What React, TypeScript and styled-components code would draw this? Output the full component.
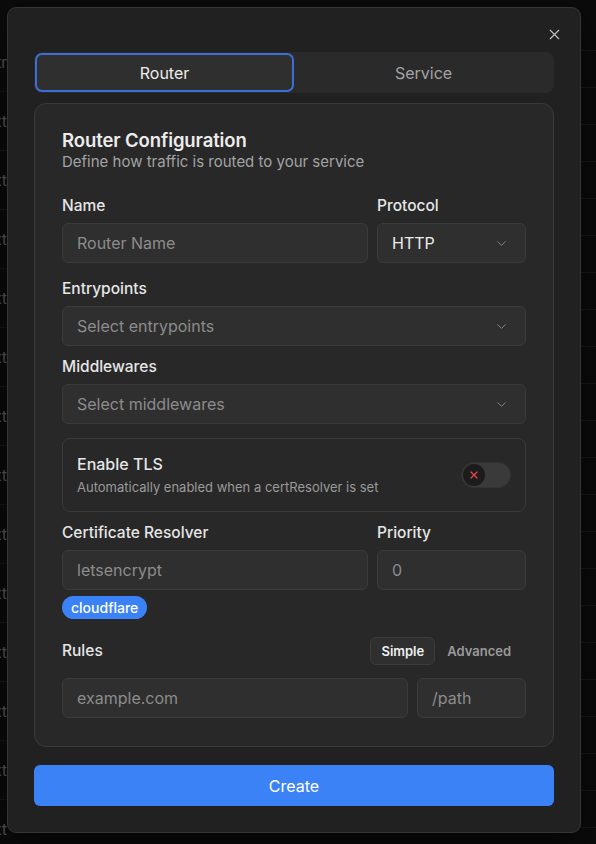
import React, { useState } from "react";
import styled, { createGlobalStyle } from "styled-components";
import { ChevronDown, X } from "lucide-react";

const GlobalStyle = createGlobalStyle`
  html, body {
    margin: 0;
    padding: 0;
    background: #111111;
    font-family: Inter, "Noto Sans", sans-serif;
    -webkit-font-smoothing: antialiased;
  }
  * { box-sizing: border-box; }
`;

/* page behind the dialog */
const Backdrop = styled.div`
  position: fixed;
  inset: 0;
  display: flex;
  background: #121212;
  overflow: hidden;
`;

const BackColumn = styled.div<{ $width: string; $row: number; $offset: number }>`
  width: ${(p) => p.$width};
  flex: ${(p) => (p.$width === "auto" ? 1 : "none")};
  display: flex;
  flex-direction: column;
  padding-top: ${(p) => p.$offset}px;

  & > div {
    height: ${(p) => p.$row}px;
    flex: none;
    border-bottom: 1px solid #262626;
    color: #8a8a8a;
    font-size: 15px;
    display: flex;
    align-items: center;
    justify-content: flex-end;
    white-space: nowrap;
    overflow: hidden;
  }
`;

const Overlay = styled.div`
  position: fixed;
  inset: 0;
  background: rgba(0, 0, 0, 0.35);
  display: flex;
  justify-content: flex-start;
  align-items: flex-start;
  padding: 7px 0 0 7px;
`;

const Dialog = styled.div`
  position: relative;
  width: 574px;
  background: #212121;
  border: 1px solid #353535;
  border-radius: 9px;
  padding: 44px 26px 26px;
  display: flex;
  flex-direction: column;
  box-shadow: 0 10px 40px rgba(0, 0, 0, 0.5);
`;

const CloseButton = styled.button`
  position: absolute;
  top: 17px;
  right: 17px;
  width: 18px;
  height: 18px;
  padding: 0;
  border: none;
  background: none;
  color: #c4c4c4;
  display: flex;
  align-items: center;
  justify-content: center;
  cursor: pointer;
`;

const TabList = styled.div`
  display: grid;
  grid-template-columns: 1fr 1fr;
  height: 41px;
  padding: 1px;
  background: #2a2a2a;
  border-radius: 8px;
`;

const Tab = styled.button<{ $active?: boolean }>`
  border: 2px solid ${(p) => (p.$active ? "#3b6fd6" : "transparent")};
  background: ${(p) => (p.$active ? "#2f2f2f" : "transparent")};
  border-radius: 7px;
  color: ${(p) => (p.$active ? "#ececec" : "#a3a3a3")};
  font-family: inherit;
  font-size: 16px;
  font-weight: 400;
  cursor: pointer;
`;

const Card = styled.div`
  margin-top: 10px;
  background: #282828;
  border: 1px solid #3a3a3a;
  border-radius: 12px;
  padding: 24px 27px 28px;
  display: flex;
  flex-direction: column;
`;

const Title = styled.h2`
  margin: 0;
  font-size: 18.5px;
  line-height: 24px;
  font-weight: 600;
  color: #ececec;
  letter-spacing: -0.1px;
`;

const Subtitle = styled.p`
  margin: 0;
  font-size: 15px;
  line-height: 20px;
  color: #a3a3a3;
`;

const Row = styled.div<{ $cols: string; $mt: number }>`
  display: grid;
  grid-template-columns: ${(p) => p.$cols};
  gap: 9px;
  margin-top: ${(p) => p.$mt}px;
`;

const Field = styled.div`
  display: flex;
  flex-direction: column;
  gap: 7px;
  min-width: 0;
`;

const Label = styled.label`
  font-size: 15.5px;
  line-height: 20px;
  font-weight: 500;
  color: #e6e6e6;
`;

const Input = styled.input`
  height: 40px;
  width: 100%;
  background: #2f2f2f;
  border: 1px solid #3b3b3b;
  border-radius: 6px;
  padding: 0 14px;
  font-family: inherit;
  font-size: 16px;
  color: #e6e6e6;
  outline: none;

  &::placeholder {
    color: #8c8c8c;
  }
`;

const Select = styled.div<{ $filled?: boolean }>`
  height: 40px;
  background: #2f2f2f;
  border: 1px solid #3b3b3b;
  border-radius: 6px;
  padding: 0 16px 0 14px;
  display: flex;
  align-items: center;
  justify-content: space-between;
  font-size: 16px;
  color: ${(p) => (p.$filled ? "#ececec" : "#8c8c8c")};

  svg {
    color: #8a8a8a;
  }
`;

const TlsBox = styled.div`
  margin-top: 14px;
  height: 74px;
  border: 1px solid #3a3a3a;
  border-radius: 8px;
  padding: 0 14px;
  display: flex;
  align-items: center;
  justify-content: space-between;
`;

const TlsText = styled.div`
  display: flex;
  flex-direction: column;
  gap: 4px;
`;

const TlsTitle = styled.div`
  font-size: 16px;
  line-height: 21px;
  font-weight: 500;
  color: #e6e6e6;
`;

const TlsHint = styled.div`
  font-size: 13px;
  line-height: 17px;
  color: #9a9a9a;
`;

const Switch = styled.button`
  width: 50px;
  height: 26px;
  border-radius: 13px;
  border: 1px solid #333;
  background: #3a3a3a;
  padding: 1px;
  display: flex;
  align-items: center;
  cursor: pointer;
`;

const Thumb = styled.span`
  width: 22px;
  height: 22px;
  border-radius: 50%;
  background: #1c1c1c;
  display: flex;
  align-items: center;
  justify-content: center;
  color: #e5484d;
`;

const Badge = styled.span`
  align-self: flex-start;
  margin-top: 6px;
  height: 23px;
  padding: 0 9px;
  border-radius: 12px;
  background: #3b82f6;
  color: #ffffff;
  font-size: 14px;
  font-weight: 500;
  display: flex;
  align-items: center;
`;

const RulesHeader = styled.div`
  margin-top: 18px;
  display: flex;
  align-items: center;
  justify-content: space-between;
`;

const ModeToggle = styled.div`
  display: flex;
  align-items: center;
  gap: 1px;
  padding-right: 4px;
`;

const ModeButton = styled.button<{ $active?: boolean }>`
  height: 28px;
  padding: 0 10px;
  border-radius: 6px;
  border: 1px solid ${(p) => (p.$active ? "#3c3c3c" : "transparent")};
  background: ${(p) => (p.$active ? "#2f2f2f" : "transparent")};
  color: ${(p) => (p.$active ? "#f0f0f0" : "#9a9a9a")};
  font-family: inherit;
  font-size: 13px;
  font-weight: 600;
  cursor: pointer;
`;

const CreateButton = styled.button`
  margin-top: 18px;
  height: 41px;
  border: none;
  border-radius: 6px;
  background: #3b82f6;
  color: #ffffff;
  font-family: inherit;
  font-size: 16px;
  font-weight: 400;
  cursor: pointer;
`;

export default function App() {
  const [tab, setTab] = useState<"router" | "service">("router");
  const [mode, setMode] = useState<"simple" | "advanced">("simple");

  return (
    <>
      <GlobalStyle />
      <Backdrop>
        <BackColumn $width="7px" $row={59} $offset={33}>
          <div>Str</div>
          {Array.from({ length: 13 }).map((_, i) => (
            <div key={i}>Ext</div>
          ))}
        </BackColumn>
        <BackColumn $width="auto" $row={37} $offset={14}>
          {Array.from({ length: 22 }).map((_, i) => (
            <div key={i} />
          ))}
        </BackColumn>
      </Backdrop>

      <Overlay>
        <Dialog>
          <CloseButton aria-label="Close">
            <X size={17} strokeWidth={1.6} />
          </CloseButton>

          <TabList>
            <Tab $active={tab === "router"} onClick={() => setTab("router")}>
              Router
            </Tab>
            <Tab $active={tab === "service"} onClick={() => setTab("service")}>
              Service
            </Tab>
          </TabList>

          <Card>
            <Title>Router Configuration</Title>
            <Subtitle>Define how traffic is routed to your service</Subtitle>

            <Row $cols="306px 1fr" $mt={24}>
              <Field>
                <Label>Name</Label>
                <Input placeholder="Router Name" />
              </Field>
              <Field>
                <Label>Protocol</Label>
                <Select $filled>
                  HTTP
                  <ChevronDown size={15} strokeWidth={1.5} />
                </Select>
              </Field>
            </Row>

            <Row $cols="1fr" $mt={16}>
              <Field>
                <Label>Entrypoints</Label>
                <Select>
                  Select entrypoints
                  <ChevronDown size={15} strokeWidth={1.5} />
                </Select>
              </Field>
            </Row>

            <Row $cols="1fr" $mt={11}>
              <Field>
                <Label>Middlewares</Label>
                <Select>
                  Select middlewares
                  <ChevronDown size={15} strokeWidth={1.5} />
                </Select>
              </Field>
            </Row>

            <TlsBox>
              <TlsText>
                <TlsTitle>Enable TLS</TlsTitle>
                <TlsHint>Automatically enabled when a certResolver is set</TlsHint>
              </TlsText>
              <Switch aria-label="Enable TLS">
                <Thumb>
                  <X size={12} strokeWidth={2.5} />
                </Thumb>
              </Switch>
            </TlsBox>

            <Row $cols="306px 1fr" $mt={11}>
              <Field>
                <Label>Certificate Resolver</Label>
                <Input placeholder="letsencrypt" />
              </Field>
              <Field>
                <Label>Priority</Label>
                <Input placeholder="0" />
              </Field>
            </Row>
            <Badge>cloudflare</Badge>

            <RulesHeader>
              <Label>Rules</Label>
              <ModeToggle>
                <ModeButton $active={mode === "simple"} onClick={() => setMode("simple")}>
                  Simple
                </ModeButton>
                <ModeButton $active={mode === "advanced"} onClick={() => setMode("advanced")}>
                  Advanced
                </ModeButton>
              </ModeToggle>
            </RulesHeader>

            <Row $cols="1fr 109px" $mt={13}>
              <Input placeholder="example.com" />
              <Input placeholder="/path" />
            </Row>
          </Card>

          <CreateButton>Create</CreateButton>
        </Dialog>
      </Overlay>
    </>
  );
}
